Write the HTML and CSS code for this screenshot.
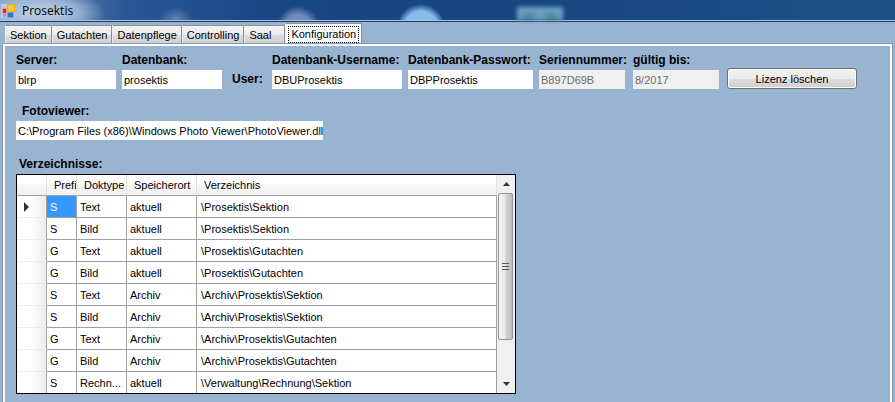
FILE: index.html
```html
<!DOCTYPE html>
<html lang="de">
<head>
<meta charset="utf-8">
<title>Prosektis</title>
<link rel="stylesheet" href="styles.css">
</head>
<body>
<div class="window">
  <header class="titlebar">
    <svg class="app-icon" width="14" height="14" viewBox="0 0 14 14" aria-hidden="true">
      <rect x="0" y="0" width="14" height="14" fill="#b9cbe4"/>
      <rect x="1.500" y="4.500" width="4" height="5" fill="#c9301c" stroke="#f0a090"/>
      <rect x="6.500" y="0.5" width="7" height="7" fill="#f8c62c" stroke="#e8b020"/>
      <rect x="2" y="10" width="3" height="3" fill="#8fa4c8"/>
      <rect x="6.500" y="8.500" width="6" height="5" fill="#3a6fd0" stroke="#7fa4e5"/>
    </svg>
    <h1 class="title">Prosektis</h1>
  </header>
  <nav class="tabs" role="tablist">
    <button class="tab" role="tab">Sektion</button>
    <button class="tab" role="tab">Gutachten</button>
    <button class="tab" role="tab">Datenpflege</button>
    <button class="tab" role="tab">Controlling</button>
    <button class="tab tab-wide" role="tab">Saal</button>
    <button class="tab tab-active" role="tab" aria-selected="true"><span class="focus">Konfiguration</span></button>
  </nav>
  <main class="panel">
    <form class="fields">
      <div class="field w-100"><label for="server">Server:</label><input id="server" type="text" value="blrp"></div>
      <div class="field w-100"><label for="db">Datenbank:</label><input id="db" type="text" value="prosektis"></div>
      <span class="user">User:</span>
      <div class="field w-130"><label for="dbuser">Datenbank-Username:</label><input id="dbuser" type="text" value="DBUProsektis"></div>
      <div class="field w-125"><label for="dbpass">Datenbank-Passwort:</label><input id="dbpass" type="text" value="DBPProsektis"></div>
      <div class="license">
        <div class="field w-86"><label for="serial">Seriennummer:</label><input id="serial" type="text" value="B897D69B" disabled></div>
        <div class="field w-86"><label for="valid">gültig bis:</label><input id="valid" type="text" value="8/2017" disabled></div>
        <button class="action" type="button">Lizenz löschen</button>
      </div>
    </form>
    <div class="field viewer"><label for="viewer">Fotoviewer:</label><input id="viewer" type="text" value="C:\Program Files (x86)\Windows Photo Viewer\PhotoViewer.dll"></div>
    <section class="directories">
      <h2 class="heading" id="dirs">Verzeichnisse:</h2>
      <div class="grid">
        <table aria-labelledby="dirs">
          <colgroup><col class="c-mark"><col class="c-prefix"><col class="c-type"><col class="c-place"><col></colgroup>
          <thead><tr><th></th><th>Prefi</th><th>Doktype</th><th>Speicherort</th><th>Verzeichnis</th></tr></thead>
          <tbody>
            <tr><td class="mark"><svg width="5" height="10" viewBox="0 0 5 10" aria-hidden="true"><path d="M0 0L5 5L0 10Z" fill="#333"/></svg></td><td class="selected">S</td><td>Text</td><td>aktuell</td><td>\Prosektis\Sektion</td></tr>
            <tr><td class="mark"></td><td>S</td><td>Bild</td><td>aktuell</td><td>\Prosektis\Sektion</td></tr>
            <tr><td class="mark"></td><td>G</td><td>Text</td><td>aktuell</td><td>\Prosektis\Gutachten</td></tr>
            <tr><td class="mark"></td><td>G</td><td>Bild</td><td>aktuell</td><td>\Prosektis\Gutachten</td></tr>
            <tr><td class="mark"></td><td>S</td><td>Text</td><td>Archiv</td><td>\Archiv\Prosektis\Sektion</td></tr>
            <tr><td class="mark"></td><td>S</td><td>Bild</td><td>Archiv</td><td>\Archiv\Prosektis\Sektion</td></tr>
            <tr><td class="mark"></td><td>G</td><td>Text</td><td>Archiv</td><td>\Archiv\Prosektis\Gutachten</td></tr>
            <tr><td class="mark"></td><td>G</td><td>Bild</td><td>Archiv</td><td>\Archiv\Prosektis\Gutachten</td></tr>
            <tr><td class="mark"></td><td>S</td><td>Rechn...</td><td>aktuell</td><td>\Verwaltung\Rechnung\Sektion</td></tr>
          </tbody>
        </table>
        <div class="scrollbar">
          <button class="arrow" type="button" aria-label="Nach oben"><svg width="7" height="4" viewBox="0 0 7 4"><path d="M0 4L3.500 0L7 4Z" fill="#333"/></svg></button>
          <div class="track"><div class="thumb"><i></i><i></i><i></i></div></div>
          <button class="arrow" type="button" aria-label="Nach unten"><svg width="7" height="4" viewBox="0 0 7 4"><path d="M0 0L3.500 4L7 0Z" fill="#333"/></svg></button>
        </div>
      </div>
    </section>
  </main>
</div>
</body>
</html>
```
FILE: styles.css
```css
* { box-sizing: border-box; }

body {
  margin: 0;
  background: #99b4d1;
  color: #000;
  font: 11px/14px "Liberation Sans", Arial, sans-serif;
}

.window {
  display: flex;
  flex-direction: column;
  min-height: 100vh;
  overflow: hidden;
}

.titlebar {
  display: flex;
  align-items: center;
  gap: 7px;
  height: 22px;
  padding: 0 1px;
  border-bottom: 1px solid #1a3766;
  box-shadow: inset 0 -1px #a9c4e4;
  background:
    radial-gradient(ellipse 66px 24px at 40px 13px, #b4c8e1 20%, #a3bbdad0 60%, transparent),
    radial-gradient(ellipse 18px 13px at 176px 20px, #6484b4, transparent),
    radial-gradient(circle 22px at 298px 28px, #7389bd 60%, transparent),
    radial-gradient(circle 24px at 421px 28px, #86bce8 70%, transparent),
    linear-gradient(90deg, #7d9ac4, #2a5796 14%, #194684 30%, #184681 60%, #1d5088);
}

.titlebar::after {
  content: "";
  width: 46px;
  height: 14px;
  margin: 6px 331px 0 auto;
  background:
    radial-gradient(ellipse 12px 6px at 12px 10px, #3c7f86, transparent),
    radial-gradient(ellipse 12px 6px at 34px 10px, #3c7f86, transparent),
    #6ea0c6;
  filter: blur(2px);
}

.app-icon { flex: none; }

.title {
  margin: 0;
  font: 12px/16px "Open Sans", "Noto Sans", sans-serif;
}

.tabs {
  display: flex;
  align-items: flex-end;
  height: 22px;
  padding: 0 5px;
}

.tab {
  height: 19px;
  padding: 0 4px;
  border: 1px solid #8a919b;
  border-left-color: #eee;
  border-bottom: 0;
  background: linear-gradient(#f3f3f3, #ebebeb 50%, #dddddd 51%, #cfcfcf);
  color: #000;
  font: 11px/14px "Liberation Sans", Arial, sans-serif;
}

.tab-wide { width: 41px; text-align: left; }

.tab-active {
  height: 21px;
  padding: 0 2px;
  background: #fff;
}

.focus {
  display: block;
  padding: 0 2px 1px;
  border: 1px dotted #000;
}

.panel {
  flex: 1;
  margin: 0 3px;
  padding: 6px 11px 6px;
  border: 2px solid #fff;
  border-bottom: 0;
  outline: 1px solid #7f9ab9;
}

.fields {
  display: flex;
  flex-wrap: wrap;
  align-items: flex-end;
  gap: 6px;
}

.license {
  display: flex;
  align-items: flex-end;
  gap: 8px;
}

.field { display: flex; flex-direction: column; }

.field label,
.user,
.heading {
  margin: 0 0 2px;
  font-size: 12px;
  font-weight: bold;
  line-height: 16px;
  white-space: nowrap;
}

.field input {
  width: 100%;
  height: 19px;
  padding: 0 0 0 2px;
  border: 0;
  background: #fff;
  color: #000;
  font: 11px/14px "Liberation Sans", Arial, sans-serif;
}

.field input:disabled { background: #f0f0f0; color: #6d6d6d; }

.w-86 { width: 86px; }
.w-100 { width: 100px; }
.w-125 { width: 125px; }
.w-130 { width: 130px; }

.user { width: 38px; padding-left: 4px; }

.action {
  width: 130px;
  height: 21px;
  padding: 0;
  border: 1px solid #707070;
  border-radius: 3px;
  box-shadow: inset 0 0 0 1px #fcfcfc;
  background: linear-gradient(#f2f2f2, #ebebeb 50%, #dddddd 51%, #cfcfcf);
  color: #000;
  font: 11px/14px "Liberation Sans", Arial, sans-serif;
}

.viewer { width: 307px; margin-top: 14px; }
.viewer label { padding-left: 6px; }

.directories { width: 500px; margin-top: 16px; }

.heading { padding-left: 3px; }

.grid {
  display: flex;
  border: 1px solid #000;
  background: #fff;
}

table {
  flex: 1;
  width: 100%;
  table-layout: fixed;
  border-collapse: separate;
  border-spacing: 0;
}

.c-mark { width: 30px; }
.c-prefix { width: 30px; }
.c-type { width: 50px; }
.c-place { width: 70px; }

th, td {
  height: 22px;
  padding: 0 3px;
  overflow: hidden;
  border-right: 1px solid #a0a0a0;
  border-bottom: 1px solid #a0a0a0;
  font-weight: normal;
  text-align: left;
  white-space: nowrap;
}

td:last-child { padding-left: 4px; }

th {
  height: 21px;
  padding: 0 0 0 7px;
  border-right-color: #e0e0e0;
  background: linear-gradient(#fff, #fff 45%, #f5f6f8 50%, #f0f1f3);
}

tbody tr:last-child td { height: 21px; border-bottom: 0; }

.mark {
  padding-left: 7px;
  border-bottom-color: #ececec;
  background: linear-gradient(90deg, #fff 45%, #ececee);
}

.mark svg { display: block; }

.selected { background: #3399ff; color: #fff; }

.scrollbar {
  display: flex;
  flex: none;
  flex-direction: column;
  width: 18px;
  padding: 0 1px;
  background: #f0f0f0;
}

.arrow {
  display: flex;
  align-items: center;
  justify-content: center;
  width: 16px;
  height: 18px;
  padding: 0;
  border: 0;
  background: #f0f0f0;
}

.track { flex: 1; }

.thumb {
  display: flex;
  flex-direction: column;
  align-items: center;
  justify-content: center;
  gap: 2px;
  width: 15px;
  height: 81%;
  border: 1px solid #979797;
  border-radius: 2px;
  background: linear-gradient(90deg, #f5f5f5, #e9e9e9 45%, #d3d3d3 55%, #bdbdbd);
}

.thumb i { width: 7px; height: 1px; background: #555; }
```
